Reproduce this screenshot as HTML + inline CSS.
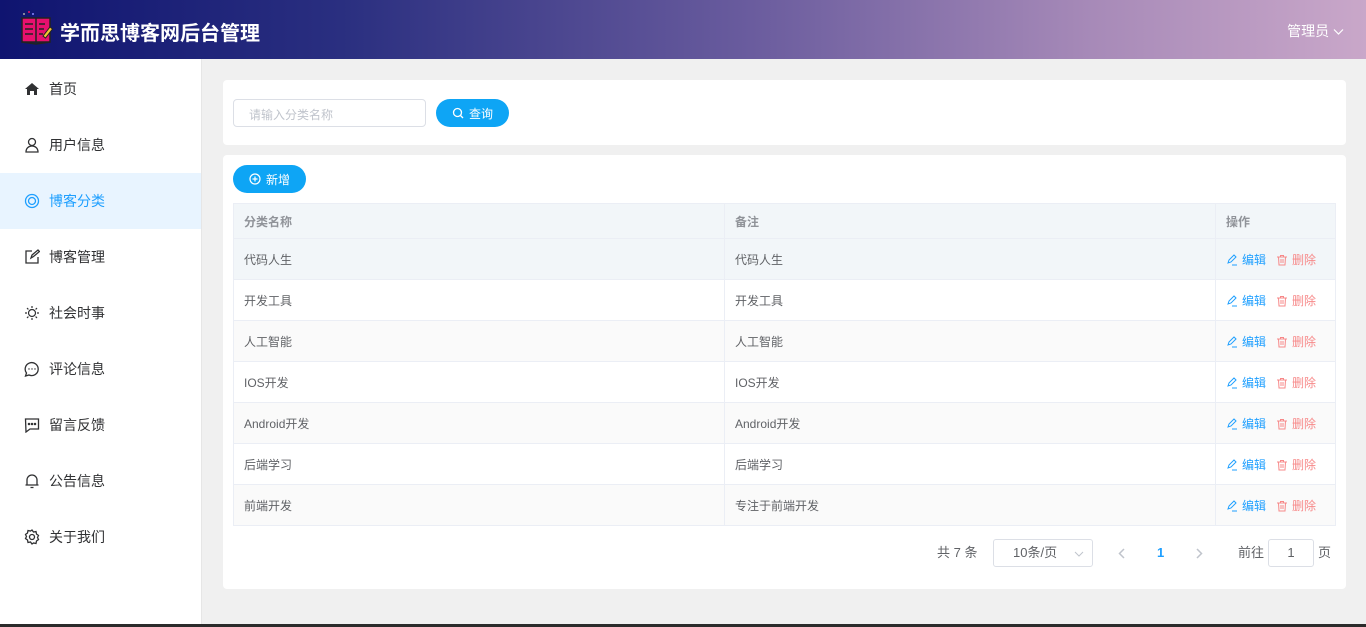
<!DOCTYPE html>
<html><head><meta charset="utf-8"><style>
*{margin:0;padding:0;box-sizing:border-box}
body{width:1366px;height:627px;overflow:hidden;font-family:"Liberation Sans","Noto Sans CJK SC",sans-serif;background:#f0f0f0;position:relative;font-size:13px;color:#606266}
.hd{position:absolute;left:0;top:0;width:1366px;height:59px;background:linear-gradient(90deg,#0f1470 0%,#2a2f80 25%,#6a5c9e 55%,#a78ab8 80%,#c9a7c9 100%)}
.hd .t{position:absolute;left:60px;top:17px;color:#fff;font-size:20px;font-weight:bold}
.hd .u{position:absolute;right:22px;top:21px;color:#fff;font-size:14px}
.sb{position:absolute;left:0;top:59px;width:202px;height:568px;background:#fff;border-right:1px solid #e6e6e6;padding-top:2px}
.it{height:56px;display:flex;align-items:center;padding-left:24px;font-size:14px;color:#303133}
.it svg{width:16px;height:16px;margin-right:9px}
.it.a{background:#e8f4ff;color:#1e9fff}
.card{position:absolute;background:#fff;border-radius:4px}
.inp{position:absolute;left:233px;top:99px;width:193px;height:28px;border:1px solid #dcdfe6;border-radius:4px;color:#c0c4cc;font-size:12px;padding:6px 15px}
.btn{position:absolute;height:28px;border-radius:14px;background:#0ea5f5;color:#fff;font-size:12px;display:flex;align-items:center;justify-content:center}
table{position:absolute;left:233px;top:203px;width:1103px;border-collapse:collapse;font-size:12px}
td,th{border:1px solid #ebeef5;height:41px;padding-left:10px;text-align:left}
th{height:35px;background:#f2f6f9;color:#909399;font-weight:bold}
tr:nth-child(even) td{background:#fafafa}
tr.h td{background:#f2f6f9}
.e{color:#1e9fff}.d{color:#f78989;margin-left:10px}
.e svg,.d svg{width:12px;height:12px;vertical-align:-2px;margin-right:4px}
.pg{position:absolute;top:539px;font-size:13px;color:#606266}
.box{position:absolute;top:539px;height:28px;border:1px solid #dcdfe6;border-radius:3px;text-align:center;line-height:26px}
</style></head><body>
<div class="hd">
<svg style="position:absolute;left:20px;top:10px" width="34" height="36" viewBox="0 0 34 36"><circle cx="4" cy="4" r="1" fill="#aaa"/><circle cx="9" cy="2" r="1" fill="#e8106e"/><circle cx="13" cy="4" r="1" fill="#88f"/><path d="M2 8h14v24H2zM16 8h14v24H16z" fill="#e8106e" stroke="#222" stroke-width="1.5"/><path d="M2 32l14 2 14-2" fill="none" stroke="#222" stroke-width="1.5"/><path d="M5 14h8M5 19h8M5 24h8M19 14h6M19 19h5M19 24h4" stroke="#222" stroke-width="1.6"/><path d="M23 26l7-9 2.5 2-7 9z" fill="#f4c430" stroke="#222"/></svg>
<div class="t">学而思博客网后台管理</div>
<div class="u">管理员 <svg width="11" height="8" viewBox="0 0 11 8"><path d="M1 1.5l4.5 4.5 4.5-4.5" fill="none" stroke="#fff" stroke-width="1.2"/></svg></div>
</div>
<div class="sb">
<div class="it"><svg viewBox="0 0 16 16"><path d="M1 8L8 2l7 6h-2v6H10V10H6v4H3V8z" fill="#303133"/></svg>首页</div>
<div class="it"><svg viewBox="0 0 16 16" fill="none" stroke="#303133" stroke-width="1.3"><circle cx="8" cy="5" r="3.5"/><path d="M2 15c0-4 3-6 6-6s6 2 6 6z"/></svg>用户信息</div>
<div class="it a"><svg viewBox="0 0 16 16" fill="none" stroke="#1e9fff" stroke-width="1.3"><circle cx="8" cy="8" r="6.5"/><circle cx="8" cy="8" r="3.5"/></svg>博客分类</div>
<div class="it"><svg viewBox="0 0 16 16" fill="none" stroke="#303133" stroke-width="1.3"><path d="M8 2H2v12h12V8"/><path d="M7 9l1-3 6-5 1.5 1.5-6 5z"/></svg>博客管理</div>
<div class="it"><svg viewBox="0 0 16 16" fill="none" stroke="#303133" stroke-width="1.2"><circle cx="8" cy="8" r="3.5"/><path d="M8 1v2M8 13v2M1 8h2M13 8h2M3 3l1.4 1.4M11.6 11.6L13 13M3 13l1.4-1.4M11.6 4.4L13 3"/></svg>社会时事</div>
<div class="it"><svg viewBox="0 0 16 16" fill="none" stroke="#303133" stroke-width="1.3"><path d="M2.5 12A6.5 6.5 0 1 1 5 14l-3.5 1z"/><circle cx="5" cy="8" r=".7" fill="#303133" stroke="none"/><circle cx="8" cy="8" r=".7" fill="#303133" stroke="none"/><circle cx="11" cy="8" r=".7" fill="#303133" stroke="none"/></svg>评论信息</div>
<div class="it"><svg viewBox="0 0 16 16" fill="none" stroke="#303133" stroke-width="1.3"><path d="M1.5 2h13v10H6l-4 3z"/><circle cx="5" cy="7" r=".6" fill="#303133"/><circle cx="8" cy="7" r=".6" fill="#303133"/><circle cx="11" cy="7" r=".6" fill="#303133"/></svg>留言反馈</div>
<div class="it"><svg viewBox="0 0 16 16" fill="none" stroke="#303133" stroke-width="1.3"><path d="M3 12V7a5 5 0 0 1 10 0v5zM1.5 12h13M6.5 14.5h3"/></svg>公告信息</div>
<div class="it"><svg viewBox="0 0 16 16" fill="none" stroke="#303133" stroke-width="1.3"><circle cx="8" cy="8" r="2.5"/><path d="M8 1l1.5 2 2.5-.5.5 2.5 2 1.5-1 2 1 2-2 1.5-.5 2.5-2.5-.5L8 15l-1.5-2-2.5.5-.5-2.5-2-1.5 1-2-1-2 2-1.5.5-2.5 2.5.5z"/></svg>关于我们</div>
</div>
<div class="card" style="left:223px;top:80px;width:1123px;height:65px"></div>
<div class="inp">请输入分类名称</div>
<div class="btn" style="left:436px;top:99px;width:73px"><svg width="12" height="12" viewBox="0 0 12 12" fill="none" stroke="#fff" stroke-width="1.3" style="margin-right:5px"><circle cx="5.5" cy="5.5" r="4"/><path d="M8.5 8.5L11 11"/></svg>查询</div>
<div class="card" style="left:223px;top:155px;width:1123px;height:434px"></div>
<div class="btn" style="left:233px;top:165px;width:73px"><svg width="12" height="12" viewBox="0 0 12 12" fill="none" stroke="#fff" stroke-width="1.2" style="margin-right:5px"><circle cx="6" cy="6" r="5"/><path d="M6 3.5v5M3.5 6h5"/></svg>新增</div>
<svg width="0" height="0" style="position:absolute"><defs>
<symbol id="ed" viewBox="0 0 12 12"><path d="M2 9l1-3 5-5 2 2-5 5zM6 11h5" fill="none" stroke="#1e9fff" stroke-width="1"/></symbol>
<symbol id="tr" viewBox="0 0 12 12"><path d="M1 3h10M4.5 3V1.5h3V3M2.5 3l.5 8h6l.5-8M5 5v4M7 5v4" fill="none" stroke="#f78989" stroke-width="1"/></symbol>
</defs></svg>
<table>
<tr><th style="width:491px">分类名称</th><th style="width:491px">备注</th><th>操作</th></tr>
<tr class="h"><td>代码人生</td><td>代码人生</td><td><span class="e"><svg><use href="#ed"/></svg>编辑</span><span class="d"><svg><use href="#tr"/></svg>删除</span></td></tr>
<tr><td>开发工具</td><td>开发工具</td><td><span class="e"><svg><use href="#ed"/></svg>编辑</span><span class="d"><svg><use href="#tr"/></svg>删除</span></td></tr>
<tr><td>人工智能</td><td>人工智能</td><td><span class="e"><svg><use href="#ed"/></svg>编辑</span><span class="d"><svg><use href="#tr"/></svg>删除</span></td></tr>
<tr><td>IOS开发</td><td>IOS开发</td><td><span class="e"><svg><use href="#ed"/></svg>编辑</span><span class="d"><svg><use href="#tr"/></svg>删除</span></td></tr>
<tr><td>Android开发</td><td>Android开发</td><td><span class="e"><svg><use href="#ed"/></svg>编辑</span><span class="d"><svg><use href="#tr"/></svg>删除</span></td></tr>
<tr><td>后端学习</td><td>后端学习</td><td><span class="e"><svg><use href="#ed"/></svg>编辑</span><span class="d"><svg><use href="#tr"/></svg>删除</span></td></tr>
<tr><td>前端开发</td><td>专注于前端开发</td><td><span class="e"><svg><use href="#ed"/></svg>编辑</span><span class="d"><svg><use href="#tr"/></svg>删除</span></td></tr>
</table>
<div class="pg" style="left:937px;line-height:28px">共 7 条</div>
<div class="box" style="left:993px;width:100px;text-align:left;padding-left:19px">10条/页<svg style="position:absolute;right:8px;top:11px" width="10" height="6" viewBox="0 0 10 6"><path d="M1 1l4 4 4-4" fill="none" stroke="#c0c4cc"/></svg></div>
<svg style="position:absolute;left:1118px;top:548px" width="7" height="11" viewBox="0 0 7 11"><path d="M6 1L1.5 5.5 6 10" fill="none" stroke="#c0c4cc" stroke-width="1.5"/></svg>
<div class="pg" style="left:1157px;line-height:28px;color:#1e9fff;font-weight:bold">1</div>
<svg style="position:absolute;left:1196px;top:548px" width="7" height="11" viewBox="0 0 7 11"><path d="M1 1l4.5 4.5L1 10" fill="none" stroke="#c0c4cc" stroke-width="1.5"/></svg>
<div class="pg" style="left:1238px;line-height:28px">前往</div>
<div class="box" style="left:1268px;width:46px">1</div>
<div class="pg" style="left:1318px;line-height:28px">页</div>
<div style="position:absolute;left:0;top:624px;width:1366px;height:3px;background:#2b2b2b"></div>
</body></html>
